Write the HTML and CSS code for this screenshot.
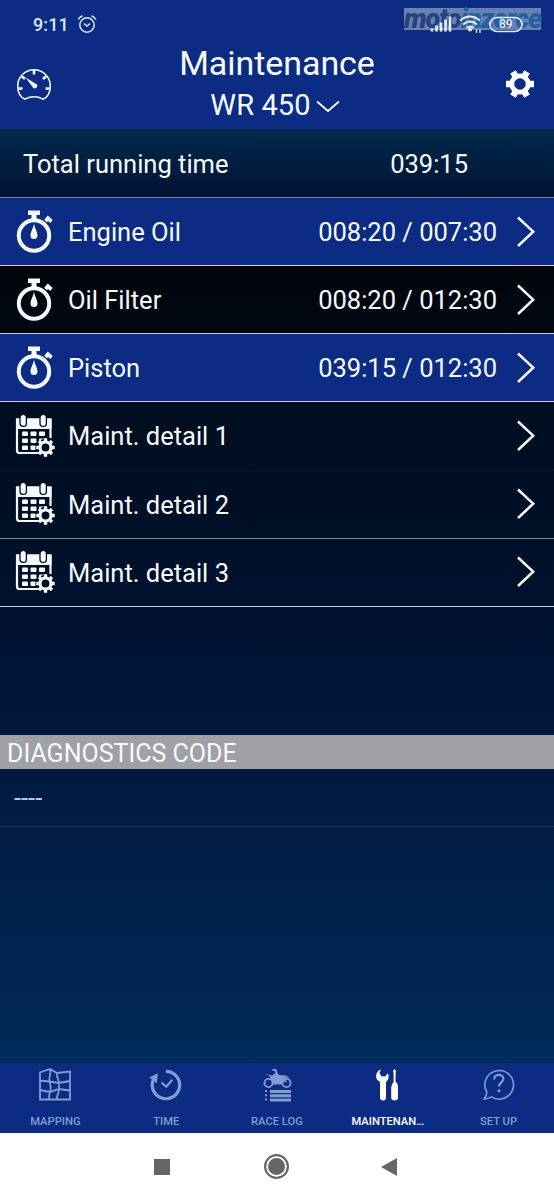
FILE: index.html
```html
<!DOCTYPE html>
<html lang="en">
<head>
<meta charset="utf-8">
<title>Maintenance</title>
<link rel="stylesheet" href="styles.css">
</head>
<body>
<svg class="defs" width="0" height="0">
  <symbol id="stopwatch" viewBox="0 0 40 46">
    <circle cx="19" cy="26.500" r="15.200" fill="none" stroke="currentColor" stroke-width="4"/>
    <path d="M13 1.500h12v4.500h-3.500v5h-5V6H13z" fill="currentColor"/>
    <path d="M30.500 12l3-3M31.500 8l5 4.500" fill="none" stroke="currentColor" stroke-width="3.800"/>
    <path d="M19 14.500c.7 5 3.500 8.500 3.500 12a3.500 3.500 0 0 1-7 0C15.500 23 18.300 19.500 19 14.500z" fill="currentColor"/>
  </symbol>
  <symbol id="calendar" viewBox="0 0 40 44">
    <path d="M32 39H4.500Q2 39 2 36.500V5.500h33.500V24" fill="none" stroke="currentColor" stroke-width="2.200"/>
    <path d="M1 4.500h35.500V15H1z" fill="currentColor"/>
    <g fill="currentColor" stroke="#000c20" stroke-width="1.300"><rect x="5" y=".4" width="6.400" height="12" rx="3.200"/><rect x="25" y=".4" width="6.400" height="12" rx="3.200"/></g>
    <g fill="currentColor"><rect x="7" y="17.500" width="6" height="4.600" rx="1"/><rect x="15.500" y="17.500" width="6" height="4.600" rx="1"/><rect x="24" y="17.500" width="6" height="4.600" rx="1"/><rect x="7" y="24.500" width="6" height="4.600" rx="1"/><rect x="15.500" y="24.500" width="6" height="4.600" rx="1"/><rect x="24" y="24.500" width="5" height="4" rx="1"/><rect x="7" y="31.500" width="6" height="4.600" rx="1"/><rect x="15.500" y="31.500" width="5" height="4.600" rx="1"/></g>
    <circle cx="30.500" cy="33.500" r="9" fill="#000c20"/>
    <circle cx="30.500" cy="33.500" r="5.500" fill="none" stroke="currentColor" stroke-width="3.200"/>
    <path d="M30.500 24.300v3M30.500 39.700v3M21.300 33.500h3M36.700 33.500h3M24 27l2.200 2.200M34.800 37.800L37 40M24 40l2.200-2.200M34.800 29.200L37 27" stroke="currentColor" stroke-width="3.400"/>
  </symbol>
  <symbol id="next" viewBox="0 0 20 32"><path d="M2 1.500l15.200 14.200L2 30" fill="none" stroke="currentColor" stroke-width="2.500"/></symbol>
</svg>
<div class="screen">
  <header class="header">
    <div class="status">
      <span class="clock">9:11</span>
      <svg class="alarm" viewBox="0 0 20 20" fill="none" stroke="currentColor" stroke-width="1.500"><circle cx="10" cy="11" r="7.200"/><path d="M7 9.500l3 2.500 3-2.500M1.300 5.500Q2.500 3 5.500 1.800M14.500 1.800Q17.500 3 18.700 5.500"/></svg>
      <div class="brand">
        <span class="moto">moto</span><span class="inzerce">inzerce</span>
        <svg class="signals" viewBox="0 0 137 26" fill="none" stroke="currentColor">
          <path d="M28 24.500v-3M32.500 24.500v-6M37 24.500v-9M41.500 24.500v-12M46 24.500V9.500" stroke-width="2.600"/>
          <path d="M56 13.500q10-8 20 0M59 17.500q7-6 14 0M62.500 21q3.500-3 7 0" stroke-width="2"/><circle cx="66" cy="22.500" r="2" fill="currentColor" stroke="none"/>
          <path d="M72.500 22.500v3.500M76 22.500v3.500" stroke-width="1.300"/>
          <rect x="86" y="10.500" width="32" height="14" rx="7" stroke-width="1.600"/>
        </svg>
        <span class="battery">89</span>
      </div>
    </div>
    <div class="bar">
      <svg class="gauge" viewBox="0 0 36 34" fill="none" stroke="currentColor"><path d="M9 32.200C4 30 1.700 25 1.700 19a16.300 16.300 0 0 1 32.600 0c0 6-2.300 11-7.300 13.200Q18 27.500 9 32.200z" stroke-width="1.500"/><path d="M18 3v4.500M2.500 21.500h4M33.500 21.500h-4M6 9.500l3 2.500M30 9.500L27 12" stroke-width="2.600"/><path d="M9.500 10.500L20.700 17.200a2.500 2.500 0 0 1-3.800 3.300z" fill="currentColor" stroke="none"/></svg>
      <div class="heading"><h1>Maintenance</h1><div class="model"><span>WR 450</span><svg viewBox="0 0 24 14"><path d="M1 1.500l11 9.500 11-9.500" fill="none" stroke="currentColor" stroke-width="1.800"/></svg></div></div>
      <svg class="gear" viewBox="-15 -15 30 30"><circle r="8.200" fill="none" stroke="currentColor" stroke-width="4.800"/><path d="M9 0h5M-9 0h-5M4.500 7.790l2.500 4.330M-4.500-7.790l-2.500-4.330M4.500-7.790l2.500-4.330M-4.500 7.790l-2.500 4.330" stroke="currentColor" stroke-width="6.400"/></svg>
    </div>
  </header>

  <main class="content">
    <div class="total"><span>Total running time</span><span class="total-time">039:15</span></div>
    <div class="row due"><svg class="icon watch"><use href="#stopwatch"/></svg><span class="label">Engine Oil</span><span class="time">008:20 / 007:30</span><svg class="next"><use href="#next"/></svg></div>
    <div class="row dark"><svg class="icon watch"><use href="#stopwatch"/></svg><span class="label">Oil Filter</span><span class="time">008:20 / 012:30</span><svg class="next"><use href="#next"/></svg></div>
    <div class="row due"><svg class="icon watch"><use href="#stopwatch"/></svg><span class="label">Piston</span><span class="time">039:15 / 012:30</span><svg class="next"><use href="#next"/></svg></div>
    <div class="row faint"><svg class="icon"><use href="#calendar"/></svg><span class="label">Maint. detail 1</span><svg class="next"><use href="#next"/></svg></div>
    <div class="row soft"><svg class="icon"><use href="#calendar"/></svg><span class="label">Maint. detail 2</span><svg class="next"><use href="#next"/></svg></div>
    <div class="row"><svg class="icon"><use href="#calendar"/></svg><span class="label">Maint. detail 3</span><svg class="next"><use href="#next"/></svg></div>
    <h2 class="diagnostics">DIAGNOSTICS CODE</h2>
    <div class="code">----</div>
  </main>

  <nav class="tabs">
    <div class="tab"><svg viewBox="0 0 34 34" fill="none" stroke="currentColor" stroke-width="1.800"><path d="M2 4.500L12 1l7 4 13-1.500V31.500H2zM12 1c1.500 4-1.500 8-.500 12s2 7 .5 11c-1 3-1.500 5-1 7.500M19 5c-1 4 2.500 7 2 11s.5 5-.5 8-1.500 5-2 7.500M2 12.500l9.500 1 9 1.500 11.500-2M2 22l10 2 9-3 11 1.500"/></svg><span>MAPPING</span></div>
    <div class="tab"><svg viewBox="0 0 34 34" fill="none" stroke="currentColor"><path d="M17 3.300A13.700 13.700 0 1 1 4.200 12" stroke-width="3.200"/><path d="M.3 9.500L8.800 5.200l-1 10z" fill="currentColor" stroke="none"/><path d="M12.500 14.500l4.800 4.300 6-7" stroke-width="2.200"/></svg><span>TIME</span></div>
    <div class="tab"><svg viewBox="0 0 34 34" fill="none" stroke="currentColor"><circle cx="8.500" cy="15" r="4.100" stroke-width="1.900"/><circle cx="26.500" cy="15" r="4.100" stroke-width="1.900"/><path d="M5 6l7 1.500L15.500 5l4 2 6 .5 4 2-6 .5-2 6.500h-8l-3-6.500-1-2z" fill="currentColor" stroke="none"/><path d="M12.500 2h3l2 5M21 8l5 6M15 16l6-5" stroke-width="2"/><path d="M10 23.500h21M10 27.800h21M10 32h21" stroke-width="2.900"/><path d="M6 22v12" stroke-width="2" stroke-dasharray="2 2.300"/></svg><span>RACE LOG</span></div>
    <div class="tab active"><svg viewBox="0 0 34 34" fill="currentColor"><path d="M10 1.500L8.500 4.800l1.800 3.500 3.700.2 2.800-3.200c1.700 3.500.7 7-1.800 8.700V29.500a3 3 0 0 1-6 0V13.800C4.800 12 4.300 8 6 4.800 7 3 8.500 1.800 10 1.500z"/><path d="M22 2.500l1.500-1.300 1.500 1.300-.4 3v9h1.200c1 2 1.200 4 1.200 6v9a3.400 3 0 0 1-6.800 0v-9c0-2 .8-4 1.800-6h.6v-9z"/></svg><span>MAINTENAN…</span></div>
    <div class="tab"><svg viewBox="0 0 34 34" fill="none" stroke="currentColor"><path d="M4.800 24A14.300 14.300 0 1 1 9.500 28.900q-3.500 2-7.300 2 2.500-2.800 2.600-6.900z" stroke-width="1.600"/><path d="M12.200 11.500c0-6 9.200-6 9.200-.8 0 3.800-4.400 3.500-4.400 7.800" stroke-width="2.100"/><circle cx="17" cy="22.800" r="1.600" fill="currentColor" stroke="none"/></svg><span>SET UP</span></div>
  </nav>
  <footer class="system"><i class="recent"></i><i class="home"></i><i class="back"></i></footer>
</div>
</body>
</html>
```
FILE: styles.css
```css
* { box-sizing: border-box; }
body { margin: 0; font-family: Roboto, sans-serif; color: #f5fbff; background: #fff; }
svg { display: block; flex: none; overflow: visible; }
.defs { position: absolute; }
.screen { width: 554px; height: 1200px; display: flex; flex-direction: column; overflow: hidden; }
span, h1, h2 { white-space: nowrap; }

.header { height: 129px; flex: none; background: #0b2c82; }
.status { height: 42px; padding: 8px 13px 0 33px; display: flex; align-items: flex-start; color: #d9e6fb; }
.clock { font-size: 18px; font-weight: 500; line-height: 34px; width: 44px; letter-spacing: .1px; }
.alarm { width: 20px; height: 20px; margin-top: 6px; }
.brand { position: relative; margin-left: auto; width: 137px; height: 22px; background: #6880b3; color: #e4efff; font: italic 900 27px/22px Roboto, sans-serif; letter-spacing: -.95px; display: flex; }
.moto { color: #25417f; }
.inzerce { color: #23609f; }
.signals { position: absolute; left: 0; top: -1px; width: 137px; height: 26px; }
.battery { position: absolute; left: 95px; top: 9px; font: 500 12px/14px Roboto, sans-serif; letter-spacing: 0; }
.bar { height: 87px; display: grid; grid-template-columns: 36px 1fr 30px; padding: 0 19px 0 16px; }
.gauge { width: 36px; height: 34px; margin-top: 25px; }
.gear { width: 30px; height: 30px; margin-top: 27px; color: #fff; }
.heading { text-align: center; }
h1 { margin: 0 3px 0 0; font-size: 34px; line-height: 42px; font-weight: 400; letter-spacing: -.05px; }
.model { display: flex; justify-content: center; align-items: center; gap: 5px; font-size: 29px; line-height: 42px; margin-right: 7px; }
.model span { letter-spacing: .1px; }
.model svg { width: 24px; height: 14px; margin-top: 4px; }

.content { height: 934px; flex: none; background: linear-gradient(#002a4d 0, #001331 68px, #000612 137px, #000814 210px, #000d20 273px, #001027 410px, #001130 490px, #001a3e 640px, #001d42 700px, #002b5c 934px); }
.total { height: 69px; display: flex; align-items: center; padding: 1px 86px 0 23px; border-bottom: 1px solid #6c82aa; font-size: 25.500px; }
.total-time { margin-left: auto; }
.row { height: 68.150px; display: flex; align-items: center; padding: 0 18px 0 16px; font-size: 25.500px; border-bottom: 1px solid #c8d2e2; }
.label, .time { padding-top: 1px; }
.due { background: #0b2c82; }
.dark { background: linear-gradient(#00040a, #000813); }
.soft { border-color: #7e8b9f; }
.faint { border-color: #061630; }
.icon { width: 40px; height: 44px; margin-left: -1px; margin-right: 13px; }
.watch { height: 46px; }
.time { margin-left: auto; }
.next { width: 20px; height: 32px; margin-left: auto; }
.time + .next { margin-left: 19px; }
.diagnostics { margin: 128px 0 0; height: 34px; padding-left: 7px; background: #a0a0a5; font-size: 25px; line-height: 37px; font-weight: 400; }
.code { height: 58px; padding-left: 14px; border-bottom: 1px solid #183458; font-size: 25.500px; line-height: 59px; color: #b9cae0; }

.tabs { height: 70px; flex: none; display: grid; grid-template-columns: repeat(5, 1fr); background: #0b2c82; }
.tab { display: flex; flex-direction: column; align-items: center; padding-top: 5px; color: #849cd2; font-size: 11.200px; line-height: 16px; font-weight: 500; }
.tab svg { width: 34px; height: 34px; margin-bottom: 12px; }
.active { color: #fff; }
.system { height: 67px; background: #fff; display: flex; align-items: center; padding-left: 154px; }
.recent { width: 16px; height: 16px; background: #666; }
.home { width: 25px; height: 25px; margin-left: 94px; border: 2px solid #666; border-radius: 50%; background: #666; box-shadow: inset 0 0 0 2px #fff; }
.back { margin-left: 92px; border: solid transparent; border-width: 9px 16px 9px 0; border-right-color: #666; }
```
